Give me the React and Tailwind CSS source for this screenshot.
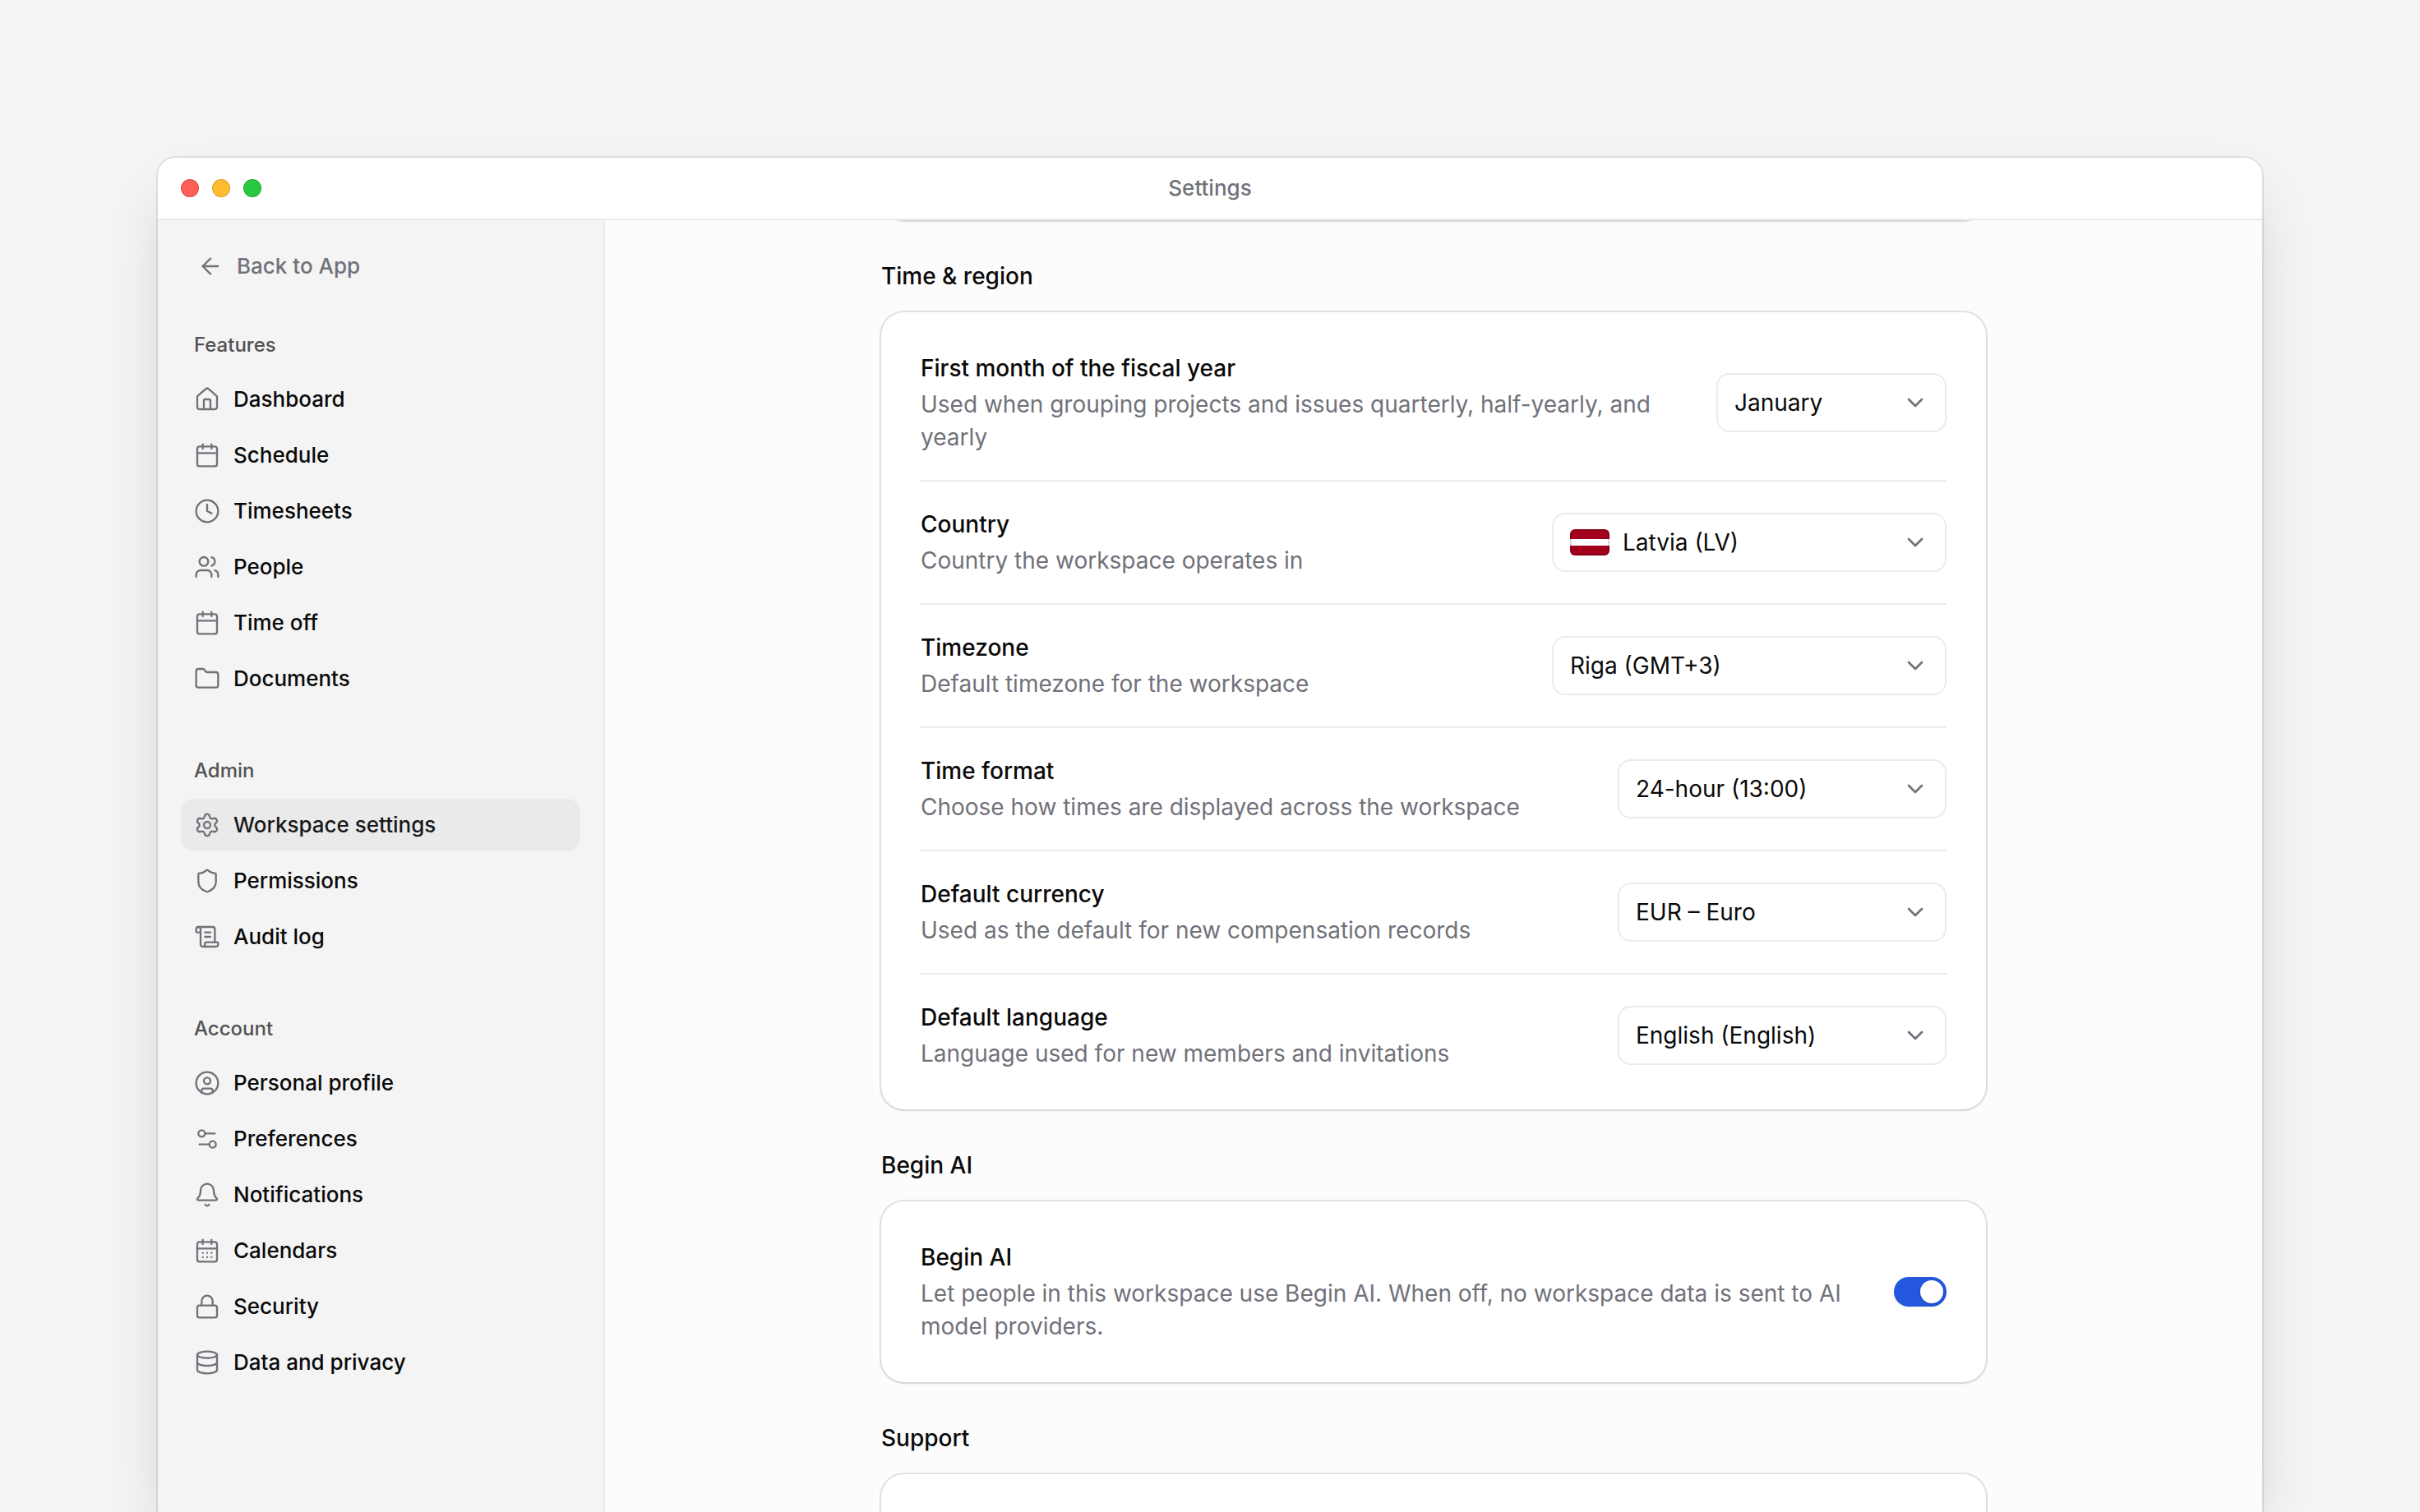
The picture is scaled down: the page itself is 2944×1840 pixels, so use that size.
import { useState } from "react";
import {
  ArrowLeft,
  Bell,
  Calendar,
  CalendarDays,
  ChevronDown,
  CircleUser,
  Clock,
  Database,
  Folder,
  House,
  Lock,
  ScrollText,
  Settings,
  Settings2,
  Shield,
  Users,
} from "lucide-react";

const navGroups = [
  {
    title: "Features",
    items: [
      { label: "Dashboard", icon: House },
      { label: "Schedule", icon: Calendar },
      { label: "Timesheets", icon: Clock },
      { label: "People", icon: Users },
      { label: "Time off", icon: Calendar },
      { label: "Documents", icon: Folder },
    ],
  },
  {
    title: "Admin",
    items: [
      { label: "Workspace settings", icon: Settings, active: true },
      { label: "Permissions", icon: Shield },
      { label: "Audit log", icon: ScrollText },
    ],
  },
  {
    title: "Account",
    items: [
      { label: "Personal profile", icon: CircleUser },
      { label: "Preferences", icon: Settings2 },
      { label: "Notifications", icon: Bell },
      { label: "Calendars", icon: CalendarDays },
      { label: "Security", icon: Lock },
      { label: "Data and privacy", icon: Database },
    ],
  },
];

const regionRows = [
  {
    id: "fiscal-month",
    title: "First month of the fiscal year",
    text: "Used when grouping projects and issues quarterly, half-yearly, and yearly",
    value: "January",
    width: "w-[280px]",
  },
  {
    id: "country",
    title: "Country",
    text: "Country the workspace operates in",
    value: "Latvia (LV)",
    width: "w-[480px]",
    flag: true,
  },
  {
    id: "timezone",
    title: "Timezone",
    text: "Default timezone for the workspace",
    value: "Riga (GMT+3)",
    width: "w-[480px]",
  },
  {
    id: "time-format",
    title: "Time format",
    text: "Choose how times are displayed across the workspace",
    value: "24-hour (13:00)",
    width: "w-[400px]",
  },
  {
    id: "currency",
    title: "Default currency",
    text: "Used as the default for new compensation records",
    value: "EUR – Euro",
    width: "w-[400px]",
  },
  {
    id: "language",
    title: "Default language",
    text: "Language used for new members and invitations",
    value: "English (English)",
    width: "w-[400px]",
  },
];

function LatviaFlag() {
  return (
    <span
      aria-hidden="true"
      className="pointer-events-none absolute left-[22px] flex h-8 w-12 flex-col overflow-hidden rounded-md after:absolute after:inset-0 after:rounded-md after:border-2 after:border-black/15"
    >
      <span className="h-3 bg-[#a2001d]" />
      <span className="h-2 bg-white" />
      <span className="h-3 bg-[#a2001d]" />
    </span>
  );
}

function TitleBar() {
  return (
    <header className="grid h-[76px] shrink-0 grid-cols-[1fr_auto_1fr] items-center border-b-2 border-[#ebebeb] bg-white px-7">
      <div className="flex gap-4">
        <button type="button" aria-label="Close" className="size-[22px] rounded-full border border-black/15 bg-[#ff5f57]" />
        <button type="button" aria-label="Minimize" className="size-[22px] rounded-full border border-black/15 bg-[#febc2e]" />
        <button type="button" aria-label="Zoom" className="size-[22px] rounded-full border border-black/15 bg-[#28c840]" />
      </div>
      <h1 className="text-[26px] leading-8 font-medium text-[#71717a]">Settings</h1>
    </header>
  );
}

function Sidebar() {
  return (
    <nav className="w-[544px] shrink-0 border-r-2 border-[#ebebeb] bg-[#f4f4f4] px-7 pt-6">
      <a href="#app" className="flex h-16 items-center gap-4 px-5 text-[26px] leading-8 font-medium text-[#71717a]">
        <ArrowLeft className="size-8" strokeWidth={1.75} />
        Back to App
      </a>
      <div className="mt-[34px] flex flex-col gap-[50px]">
        {navGroups.map((group) => (
          <section key={group.title}>
            <h2 className="flex h-[60px] items-center px-4 text-2xl font-medium text-[#525252]">{group.title}</h2>
            <ul className="mt-1 flex flex-col gap-1">
              {group.items.map(({ label, icon: Icon, active }) => (
                <li key={label}>
                  <a
                    href="#settings"
                    aria-current={active ? "page" : undefined}
                    className={`flex h-16 items-center gap-4 rounded-2xl px-4 text-[26px] leading-8 font-medium ${
                      active ? "bg-[#eaeaea] text-[#18181b]" : "text-[#0a0a0a]"
                    }`}
                  >
                    <Icon className="size-8 text-[#71717a]" strokeWidth={1.75} />
                    {label}
                  </a>
                </li>
              ))}
            </ul>
          </section>
        ))}
      </div>
    </nav>
  );
}

function Card({ children }) {
  return (
    <div className="rounded-[28px] bg-white px-12 py-4 shadow-[0_0_0_2px_rgba(0,0,0,0.1),0_2px_4px_rgba(0,0,0,0.06)]">
      {children}
    </div>
  );
}

function Section({ title, children }) {
  return (
    <section>
      <h2 className="flex h-28 items-center pt-6 text-[28px] font-medium text-[#0a0a0a]">{title}</h2>
      <Card>{children}</Card>
    </section>
  );
}

function Row({ id, title, text, children }) {
  return (
    <div className="flex items-center justify-between gap-12 border-b-2 border-[#ebebeb] py-8 last:border-b-0">
      <div className="flex flex-col gap-1 text-[28px] leading-10">
        <label htmlFor={id} className="font-medium text-[#0a0a0a]">{title}</label>
        <p className="text-[#71717a]">{text}</p>
      </div>
      {children}
    </div>
  );
}

function SelectBox({ id, value, width, flag }) {
  return (
    <div className={`relative flex shrink-0 items-center ${width}`}>
      <select
        id={id}
        defaultValue={value}
        className={`h-[72px] w-full appearance-none rounded-2xl border-2 border-[#ebebeb] bg-white pr-16 text-[28px] text-[#0a0a0a] ${
          flag ? "pl-[84px]" : "pl-5"
        }`}
      >
        <option>{value}</option>
      </select>
      {flag && <LatviaFlag />}
      <ChevronDown className="pointer-events-none absolute right-[22px] size-8 text-[#71717a]" />
    </div>
  );
}

function Toggle({ id }) {
  const [on, setOn] = useState(true);
  return (
    <input
      id={id}
      type="checkbox"
      role="switch"
      checked={on}
      onChange={(e) => setOn(e.target.checked)}
      className="h-9 w-16 shrink-0 appearance-none rounded-full bg-[#d4d4d8] p-1 shadow-[0_2px_4px_rgba(0,0,0,0.06)] before:block before:size-7 before:rounded-full before:bg-white before:shadow-[0_2px_4px_rgba(0,0,0,0.15)] checked:bg-[#2257de] checked:before:ml-auto"
    />
  );
}

export default function App() {
  return (
    <div className="flex h-screen flex-col overflow-hidden bg-[#f4f4f4] px-48 pt-48 font-['Inter',sans-serif] antialiased">
      <div className="flex min-h-0 flex-1 flex-col overflow-hidden rounded-t-[22px] bg-[#fcfcfc] shadow-[0_0_0_2px_rgba(0,0,0,0.08),0_36px_80px_-20px_rgba(0,0,0,0.2)]">
        <TitleBar />
        <div className="flex min-h-0 flex-1">
          <Sidebar />
          <main className="min-w-0 flex-1 overflow-hidden">
            <div className="mx-auto max-w-[1344px]">
              <div className="-mt-24">
                <Card>
                  <div className="h-16" />
                </Card>
              </div>
              <Section title="Time & region">
                {regionRows.map((row) => (
                  <Row key={row.id} id={row.id} title={row.title} text={row.text}>
                    <SelectBox id={row.id} value={row.value} width={row.width} flag={row.flag} />
                  </Row>
                ))}
              </Section>
              <Section title="Begin AI">
                <Row
                  id="begin-ai"
                  title="Begin AI"
                  text="Let people in this workspace use Begin AI. When off, no workspace data is sent to AI model providers."
                >
                  <Toggle id="begin-ai" />
                </Row>
              </Section>
              <Section title="Support">
                <div className="h-40" />
              </Section>
            </div>
          </main>
        </div>
      </div>
    </div>
  );
}
